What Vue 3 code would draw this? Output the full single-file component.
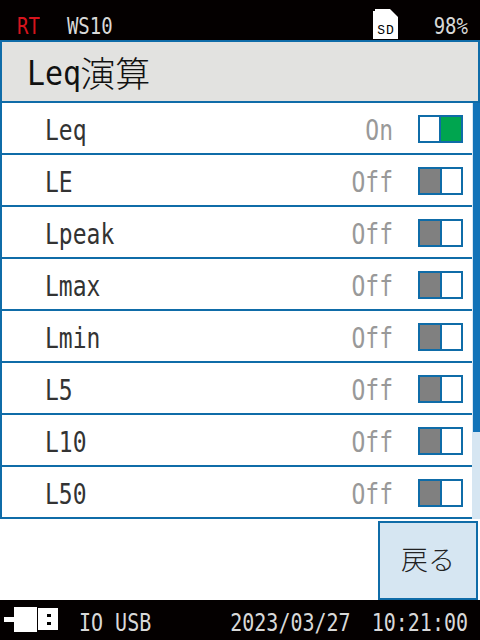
<template>
  <div class="screen">
    <header class="top-bar">
      <div class="top-left">
        <span class="tall rt">RT</span>
        <span class="tall">WS10</span>
      </div>
      <div class="top-right">
        <svg class="sd" width="26" height="30" viewBox="0 0 26 30">
          <path d="M2 0H17L25 8V30H0V2H2Z" fill="#fff" />
          <text x="13" y="25" text-anchor="middle" class="sd-text">SD</text>
        </svg>
        <span class="tall">98%</span>
      </div>
    </header>

    <div class="panel">
      <div class="title">
        <span class="title-latin">Leq</span><span class="title-cjk">演算</span>
      </div>
      <div class="list-wrap">
        <ul class="list">
          <li v-for="item in items" :key="item.name" class="row">
            <span class="name"><span class="tall">{{ item.name }}</span></span>
            <span class="state tall">{{ item.on ? 'On' : 'Off' }}</span>
            <span class="toggle" :class="{ on: item.on }">
              <i class="knob"></i>
            </span>
          </li>
        </ul>
        <div class="scroll">
          <div class="thumb"></div>
        </div>
      </div>
      <div class="actions">
        <button class="back">戻る</button>
      </div>
    </div>

    <footer class="bottom-bar">
      <div class="bottom-left">
        <svg width="56" height="26" viewBox="0 0 56 26">
          <path d="M0 10H10V0H33V25H10V15H0Z" fill="#fff" />
          <rect x="34" y="1" width="20" height="22" fill="#fff" />
          <rect x="43" y="7" width="4" height="3" fill="#000" />
          <rect x="43" y="15" width="4" height="3" fill="#000" />
        </svg>
        <span class="tall">IO USB</span>
      </div>
      <div class="bottom-right">
        <span class="tall">2023/03/27</span>
        <span class="tall">10:21:00</span>
      </div>
    </footer>
  </div>
</template>

<script setup>
const items = [
  { name: 'Leq', on: true },
  { name: 'LE', on: false },
  { name: 'Lpeak', on: false },
  { name: 'Lmax', on: false },
  { name: 'Lmin', on: false },
  { name: 'L5', on: false },
  { name: 'L10', on: false },
  { name: 'L50', on: false }
]
</script>

<style>
html, body {
  margin: 0;
  background: #000;
}
</style>

<style scoped>
.screen {
  width: 480px;
  height: 640px;
  display: flex;
  flex-direction: column;
  background: #040000;
  font-family: "DejaVu Sans Mono", "Noto Sans CJK JP", monospace;
  overflow: hidden;
}

/* the device font is narrow and tall, the mono one only needs stretching */
.tall {
  display: inline-block;
  transform: scaleY(1.22);
}

.top-bar {
  height: 40px;
  padding: 9px 12px 0 17px;
  box-sizing: border-box;
  display: flex;
  justify-content: space-between;
  align-items: center;
  color: #d8d8d8;
  font-size: 19px;
}

.top-left {
  display: flex;
  gap: 27px;
}

.rt {
  color: #d7141d;
}

.top-right {
  display: flex;
  align-items: center;
  gap: 35px;
}

.sd {
  margin-top: -2px;
}

.sd-text {
  font-size: 13px;
  letter-spacing: 1px;
  fill: #000;
  font-family: "Liberation Mono", monospace;
}

.panel {
  flex: 1;
  min-height: 0;
  display: flex;
  flex-direction: column;
  background: #fff;
  border-top: 2px solid #0f6ca8;
}

.title {
  height: 60px;
  box-sizing: border-box;
  padding-left: 25px;
  display: flex;
  align-items: center;
  background: #e2e2e0;
  color: #111;
  border-left: 2px solid #0f6ca8;
  border-right: 2px solid #0f6ca8;
}

.title-latin {
  font-size: 30px;
  transform: scaleY(1.15);
  margin-top: 2px;
}

.title-cjk {
  font-family: "Noto Sans CJK JP", sans-serif;
  font-size: 35px;
  font-weight: 300;
  margin-left: -1px;
}

.list-wrap {
  display: flex;
  border-top: 2px solid #0f6ca8;
  border-left: 2px solid #0f6ca8;
}

.list {
  flex: 1;
  margin: 0;
  padding: 0;
  list-style: none;
}

.row {
  height: 52px;
  box-sizing: border-box;
  padding: 1px 9px 0 43px;
  display: flex;
  align-items: center;
  border-bottom: 2px solid #0f6ca8;
  font-size: 23px;
  color: #333;
}

.name {
  flex: 1;
  margin-top: 2px;
}

.state {
  color: #999;
  margin: 2px 25px 0 0;
}

.toggle {
  width: 45px;
  height: 28px;
  box-sizing: border-box;
  display: flex;
  border: 2px solid #0f6ca8;
  background: #fff;
}

.knob {
  width: 20px;
  background: #808080;
  border-right: 2px solid #0f6ca8;
}

.toggle.on {
  justify-content: flex-end;
}

.toggle.on .knob {
  background: #00a54f;
  border-right: 0;
  border-left: 2px solid #0f6ca8;
}

.scroll {
  width: 8px;
  background: #d6e6f2;
}

.thumb {
  width: 7px;
  height: 329px;
  margin-left: 1px;
  background: #1273b8;
}

.actions {
  flex: 1;
  display: flex;
  justify-content: flex-end;
}

.back {
  width: 100px;
  height: 79px;
  margin: 2px 2px 0 0;
  box-sizing: border-box;
  border: 2px solid #0f6ca8;
  background: #d6e6f2;
  color: #222;
  font-family: "Noto Sans CJK JP", sans-serif;
  font-size: 27px;
  font-weight: 300;
  padding: 0 0 4px;
}

.bottom-bar {
  height: 40px;
  padding: 3px 12px 0 4px;
  box-sizing: border-box;
  display: flex;
  justify-content: space-between;
  align-items: center;
  color: #d8d8d8;
  font-size: 20px;
}

.bottom-left {
  display: flex;
  align-items: center;
  gap: 19px;
}

.bottom-left svg {
  margin-top: -4px;
}

.bottom-right {
  display: flex;
  gap: 21px;
}
</style>
